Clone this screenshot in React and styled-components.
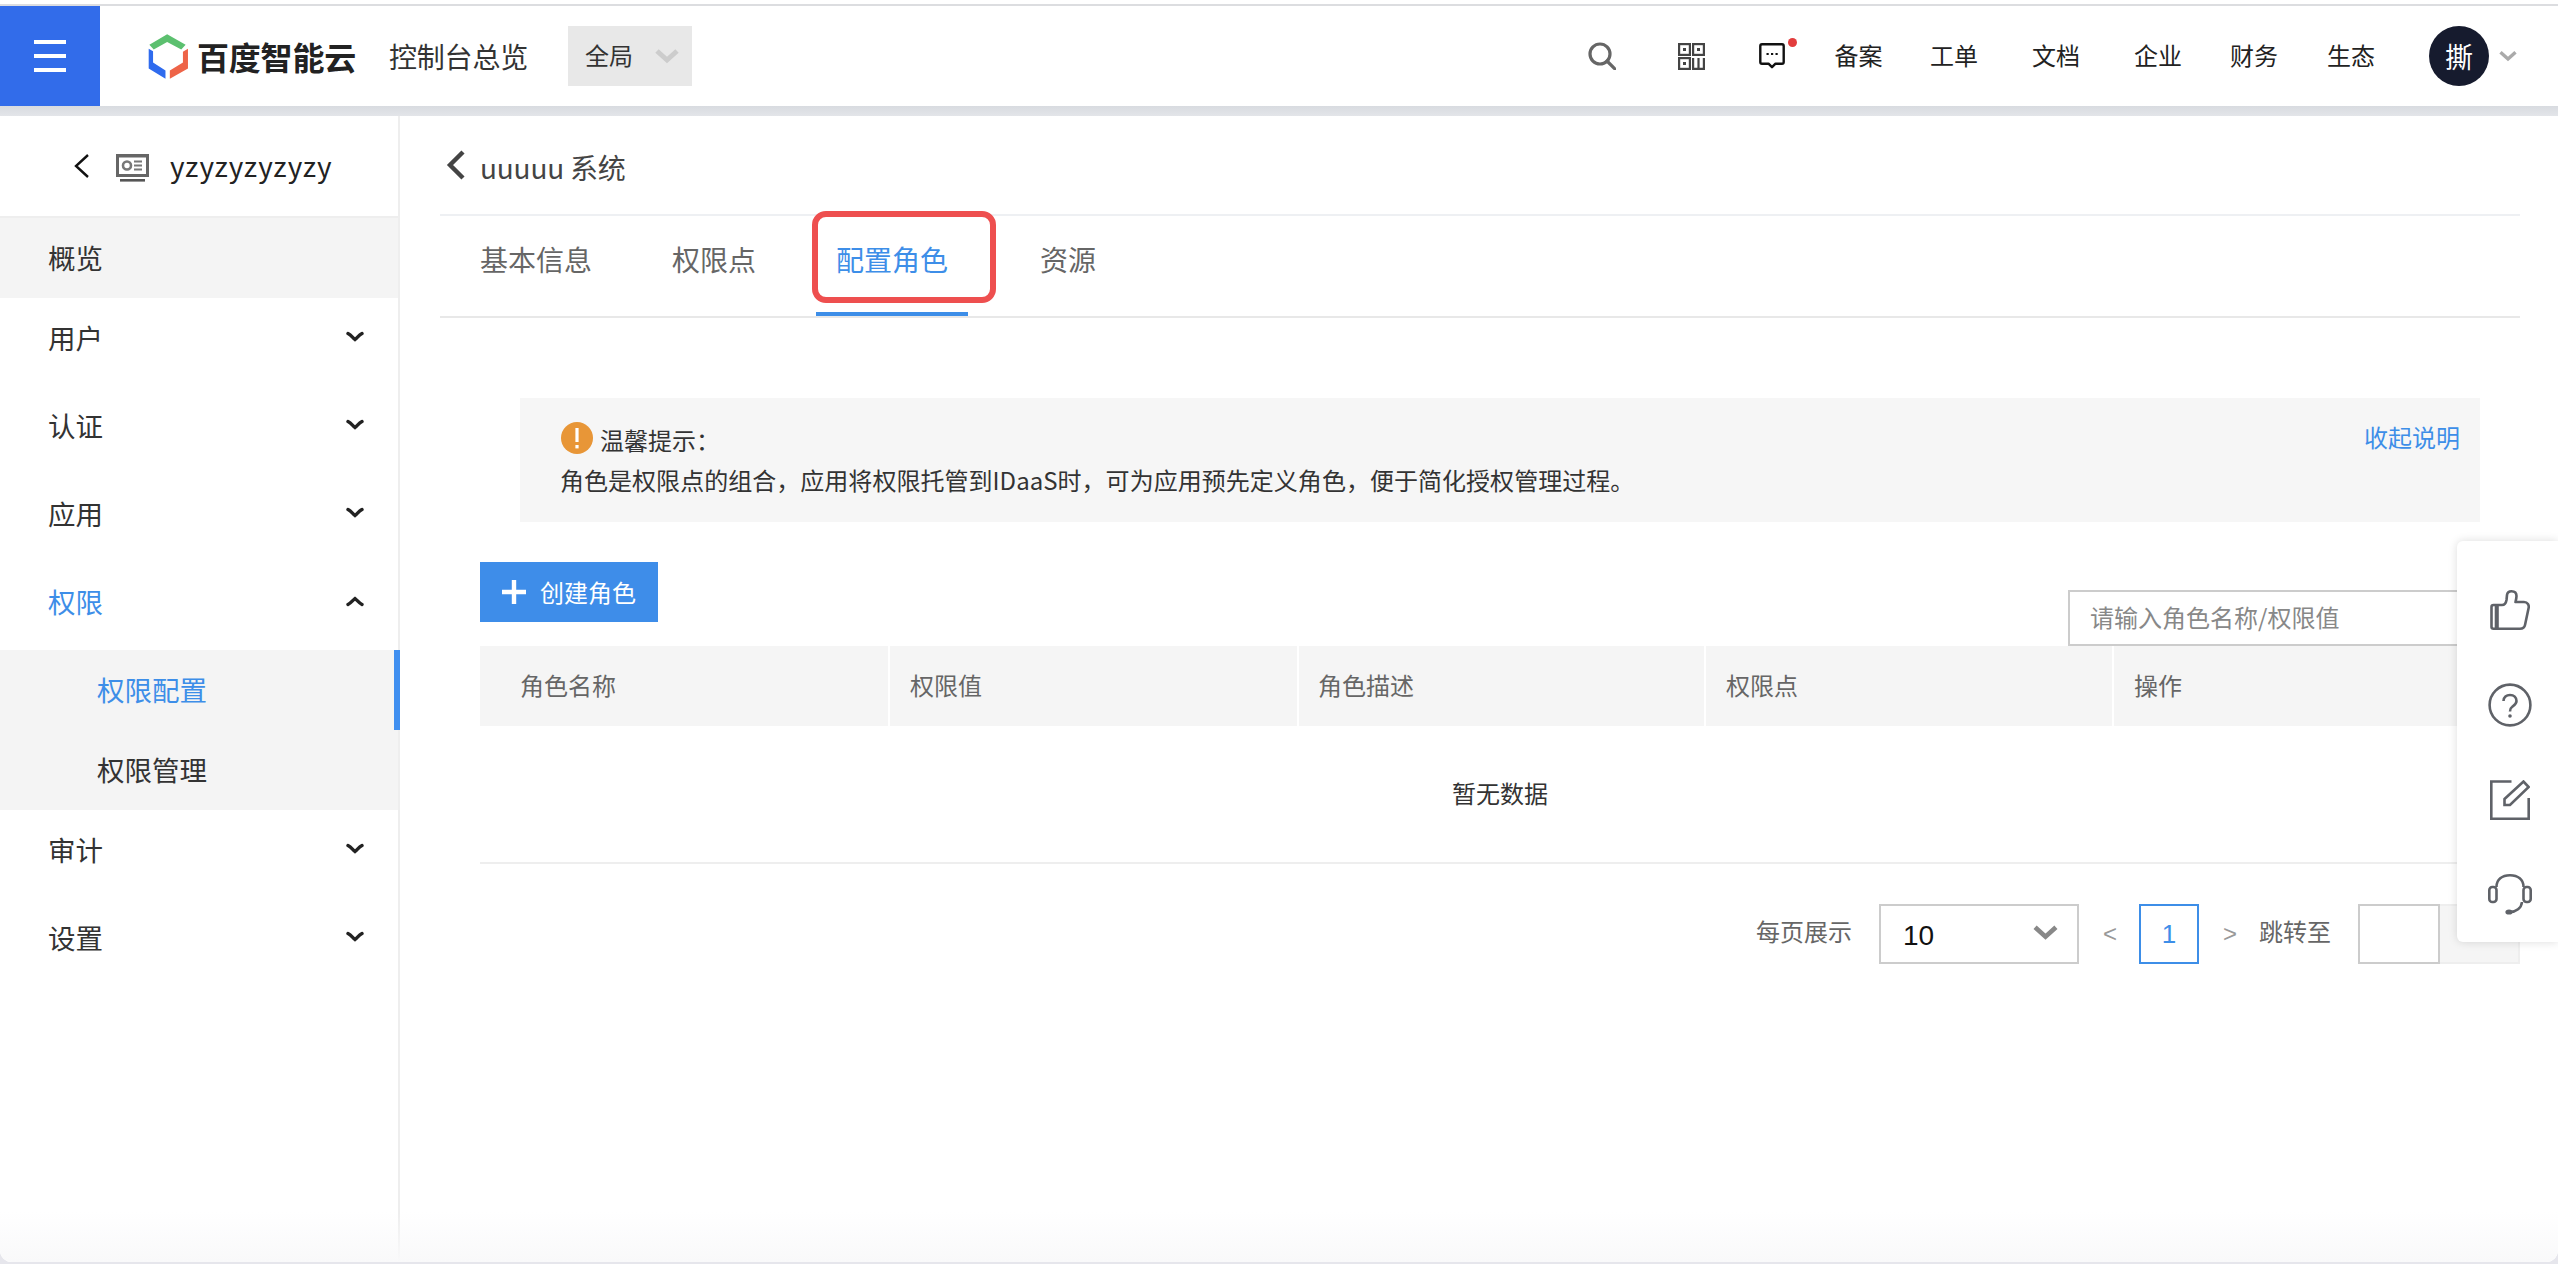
import React from "react";
import styled, { createGlobalStyle } from "styled-components";

const Global = createGlobalStyle`
  html, body { margin: 0; padding: 0; background: #e6e6ec; }
  body { font-family: "Noto Sans CJK SC", "Noto Sans", sans-serif; color: #333; overflow: hidden; }
  * { box-sizing: border-box; }
`;

const Page = styled.div`
  position: relative;
  width: 2558px;
  height: 1262px;
  background: #fff;
  border-radius: 0 0 12px 12px;
  overflow: hidden;
  display: flex;
  flex-direction: column;
`;
const TopEdge = styled.div`
  height: 6px;
  flex: none;
  background: #fff;
  border-bottom: 2px solid #dcdde0;
`;
const Header = styled.header`
  height: 100px;
  flex: none;
  display: flex;
  align-items: center;
  background: #fff;
`;
const HeaderShade = styled.div`
  height: 10px;
  flex: none;
  background: linear-gradient(#d8dbe0, #e3e5e9);
`;
const Burger = styled.div`
  width: 100px;
  height: 100px;
  background: #326cea;
  display: flex;
  flex-direction: column;
  align-items: center;
  justify-content: center;
  gap: 10px;
`;
const BurgerBar = styled.span`
  width: 32px;
  height: 4px;
  background: #fff;
`;
const Brand = styled.div`
  display: flex;
  align-items: center;
  margin-left: 47px;
  gap: 7px;
`;
const BrandName = styled.span`
  font-size: 32px;
  font-weight: 700;
  color: #222;
  letter-spacing: -0.2px;
  white-space: nowrap;
`;
const ConsoleTitle = styled.span`
  margin-left: 33px;
  font-size: 28px;
  letter-spacing: -0.2px;
  color: #333;
`;
const ScopeSelect = styled.div`
  margin-left: 40px;
  width: 124px;
  height: 60px;
  background: #e8e8e8;
  display: flex;
  align-items: center;
  padding: 0 0 0 17px;
  gap: 22px;
  font-size: 24px;
  color: #333;
`;
const ScopeText = styled.span`
  margin-bottom: 3px;
`;
const HeaderRight = styled.div`
  margin-left: auto;
  display: flex;
  align-items: center;
  padding-right: 41px;
`;
const IconSlot = styled.span`
  display: flex;
  position: relative;
  margin-left: ${(p) => p.$ml || 0}px;
`;
const RedDot = styled.i`
  position: absolute;
  top: -5px;
  right: -12px;
  width: 9px;
  height: 9px;
  border-radius: 50%;
  background: #e23d3d;
`;
const NavLink = styled.span`
  font-size: 24px;
  color: #222;
  margin-left: ${(p) => p.$ml}px;
  margin-bottom: 3px;
`;
const Avatar = styled.span`
  width: 60px;
  height: 60px;
  margin-left: 54px;
  border-radius: 50%;
  background: #161b2e;
  color: #fff;
  font-size: 28px;
  display: flex;
  align-items: center;
  justify-content: center;
`;
const AvatarCaret = styled.span`
  display: flex;
  margin-left: 10px;
`;

const Body = styled.div`
  flex: 1;
  display: flex;
  min-height: 0;
  background: #fff;
`;
const Sidebar = styled.aside`
  width: 400px;
  flex: none;
  border-right: 2px solid #eeeeee;
`;
const SideHead = styled.div`
  height: 102px;
  border-bottom: 2px solid #eeeeee;
  display: flex;
  align-items: center;
  padding-left: 74px;
  font-size: 28px;
  color: #222;
`;
const SideIcon = styled.span`
  display: flex;
  margin: 3px 21px 0 27px;
`;
const SideName = styled.span`
  margin-bottom: 3px;
  letter-spacing: 1.2px;
`;
const MenuRow = styled.div`
  height: 80px;
  margin-bottom: ${(p) => p.$mb ?? 8}px;
  padding: 0 34px 3px 48px;
  display: flex;
  align-items: center;
  justify-content: space-between;
  font-size: 27.5px;
  color: ${(p) => (p.$active ? "#3d8ee8" : "#333")};
  background: ${(p) => (p.$shaded ? "#f4f4f4" : "transparent")};
`;
const SubGroup = styled.div`
  background: #f4f4f4;
`;
const SubRow = styled.div`
  position: relative;
  height: 80px;
  padding: 0 0 3px 97px;
  display: flex;
  align-items: center;
  font-size: 27.5px;
  color: ${(p) => (p.$active ? "#3d8ee8" : "#333")};
  &::after {
    content: "";
    display: ${(p) => (p.$active ? "block" : "none")};
    position: absolute;
    top: 0;
    bottom: 0;
    right: -2px;
    width: 6px;
    background: #3f8ff0;
  }
`;

const Main = styled.main`
  flex: 1;
  min-width: 0;
  padding: 0 38px 0 40px;
`;
const BackRow = styled.div`
  height: 100px;
  border-bottom: 2px solid #eef0f3;
  display: flex;
  align-items: center;
  padding-left: 6px;
  gap: 15px;
  font-size: 28px;
  color: #444;
`;
const BackTitle = styled.span`
  margin-top: 3px;
  letter-spacing: -0.2px;
`;
const Tabs = styled.nav`
  height: 102px;
  border-bottom: 2px solid #e8e8e8;
  display: flex;
  padding-left: 20px;
`;
const Tab = styled.div`
  position: relative;
  height: 100px;
  padding: 0 20px 11px;
  margin-left: ${(p) => p.$ml || 0}px;
  border-bottom: 4px solid ${(p) => (p.$active ? "#3d8ee8" : "transparent")};
  display: flex;
  align-items: center;
  font-size: 28px;
  color: ${(p) => (p.$active ? "#3d8ee8" : "#666")};
`;
const Annotation = styled.span`
  position: absolute;
  top: -5px;
  left: -4px;
  width: 184px;
  height: 92px;
  border: 6px solid #ee4f4f;
  border-radius: 14px;
`;
const Section = styled.section`
  padding-left: 40px;
`;
const Notice = styled.div`
  margin: 80px 40px 40px 40px;
  height: 124px;
  background: #f6f6f6;
  padding: 22px 20px 20px 40px;
  display: flex;
  justify-content: space-between;
  font-size: 24px;
  line-height: 40px;
  color: #333;
`;
const NoticeTitle = styled.div`
  display: flex;
  align-items: center;
  gap: 7px;
`;
const NoticeIcon = styled.span`
  width: 32px;
  height: 32px;
  margin-top: -5px;
  margin-left: 1px;
  display: flex;
`;
const NoticeBody = styled.div`
  letter-spacing: 0.03px;
`;
const Collapse = styled.a`
  color: #3d8ee8;
  line-height: 34px;
`;
const Toolbar = styled.div`
  height: 84px;
  display: flex;
  justify-content: space-between;
  align-items: flex-start;
`;
const PrimaryButton = styled.button`
  width: 178px;
  height: 60px;
  border: 0;
  padding: 0 0 0 22px;
  background: #3e8de9;
  color: #fff;
  font: inherit;
  font-size: 24px;
  display: flex;
  align-items: center;
  gap: 14px;
`;
const ButtonLabel = styled.span`
  margin-bottom: 2px;
`;
const SearchInput = styled.input`
  width: 452px;
  height: 56px;
  margin-top: 28px;
  border: 2px solid #cccccc;
  padding: 0 20px 3px;
  font: inherit;
  font-size: 24px;
  outline: none;
  &::placeholder { color: #888; opacity: 1; }
`;
const HeadRow = styled.div`
  display: grid;
  grid-template-columns: 408px 407px 405px 406px 1fr;
  gap: 2px;
`;
const HeadCell = styled.div`
  height: 80px;
  background: #f5f5f5;
  padding: 0 0 3px ${(p) => p.$pl}px;
  display: flex;
  align-items: center;
  font-size: 24px;
  color: #666;
`;
const EmptyRow = styled.div`
  height: 138px;
  padding-bottom: 3px;
  border-bottom: 2px solid #eeeeee;
  display: flex;
  align-items: center;
  justify-content: center;
  font-size: 24px;
  color: #333;
`;
const Pager = styled.div`
  margin-top: 40px;
  display: flex;
  justify-content: flex-end;
  align-items: center;
  gap: 24px;
  font-size: 24px;
  color: #666;
`;
const PagerLabel = styled.span`
  margin-bottom: 7px;
  margin-right: 3px;
`;
const SizeSelect = styled.div`
  width: 200px;
  height: 60px;
  border: 2px solid #cccccc;
  padding: 4px 19px 0 22px;
  display: flex;
  align-items: center;
  justify-content: space-between;
  font-family: "Liberation Sans", sans-serif;
  font-size: 28px;
  color: #111;
`;
const SizeCaret = styled.span`
  display: flex;
  margin-bottom: 8px;
`;
const PageArrow = styled.span`
  width: 12px;
  font-family: "Liberation Sans", sans-serif;
  font-size: 24px;
  color: #999;
`;
const PageNumber = styled.span`
  width: 60px;
  height: 60px;
  border: 2px solid #3d8ee8;
  color: #3d8ee8;
  font-family: "Liberation Sans", sans-serif;
  font-size: 26px;
  display: flex;
  align-items: center;
  justify-content: center;
`;
const GotoGroup = styled.div`
  display: flex;
`;
const GotoInput = styled.div`
  width: 82px;
  height: 60px;
  border: 2px solid #cccccc;
`;
const GotoButton = styled.div`
  width: 80px;
  height: 60px;
  border: 2px solid #eeeeee;
  border-left: 0;
  background: #f5f5f5;
`;
const FloatPanel = styled.div`
  position: absolute;
  top: 541px;
  right: 0;
  width: 101px;
  height: 401px;
  padding: 22px 0 0 5px;
  background: #fff;
  border-radius: 6px 0 0 6px;
  box-shadow: 0 0 10px rgba(0, 0, 0, 0.14);
  display: flex;
  flex-direction: column;
  align-items: center;
`;
const FloatButton = styled.div`
  height: 96px;
  display: flex;
  align-items: center;
  justify-content: center;
`;
const BottomFade = styled.div`
  position: absolute;
  left: 0;
  right: 0;
  bottom: 0;
  height: 50px;
  background: linear-gradient(rgba(249, 249, 250, 0), #f9f9fa);
  pointer-events: none;
`;

const Logo = () => (
  <svg width="43" height="47" viewBox="50 38 128 140">
    <path d="M110 42 L165 73 L152 87 L110 65 L70 87 L57 73 Z" fill="#5cc06f" />
    <path d="M55 85 L68 92 L68 126 L105 150 L105 174 L55 144 Z" fill="#2f6bee" />
    <path d="M172 85 L172 144 L118 174 L118 150 L157 126 L157 94 Z" fill="#ee6448" />
  </svg>
);
const Chevron = ({ w, h, color, sw }) => (
  <svg width={w} height={h} viewBox="0 0 24 16">
    <path d="M2 3 L12 12 L22 3" fill="none" stroke={color} strokeWidth={sw} />
  </svg>
);
const MenuCaret = ({ up }) => (
  <svg width="18" height="12" viewBox="0 0 18 12">
    <path
      d={up ? "M2 9.5 C5 8 7 5 9 3.5 C11 5 13 8 16 9.5" : "M2 2.5 C5 4 7 7 9 8.5 C11 7 13 4 16 2.5"}
      fill="none"
      stroke="#222"
      strokeWidth="3.4"
      strokeLinecap="round"
    />
  </svg>
);
const SearchGlyph = () => (
  <svg width="28" height="28" viewBox="0 0 28 28" fill="none" stroke="#666" strokeWidth="3.2">
    <circle cx="12" cy="12" r="10" />
    <path d="M19 19 L27 27" strokeLinecap="round" />
  </svg>
);
const QrGlyph = () => (
  <svg width="27" height="27" viewBox="0 0 27 27" fill="none" stroke="#444" strokeWidth="2.2">
    <rect x="1.1" y="1.1" width="10.8" height="10.8" />
    <rect x="15.1" y="1.1" width="10.8" height="10.8" />
    <rect x="1.1" y="15.1" width="10.8" height="10.8" />
    <path d="M15.1 15 V25.9 H25.9 V15 M20.5 15 V25.9" />
    <rect x="5" y="5" width="3" height="3" fill="#444" stroke="none" />
    <rect x="19" y="5" width="3" height="3" fill="#444" stroke="none" />
    <rect x="5" y="19" width="3" height="3" fill="#444" stroke="none" />
  </svg>
);
const ChatGlyph = () => (
  <svg width="26" height="26" viewBox="0 0 26 26" fill="none">
    <path
      d="M3 1.3 H23 C24 1.3 24.7 2 24.7 3 V19 C24.7 20 24 20.7 23 20.7 H16.5 L13 24.2 L9.5 20.7 H3 C2 20.7 1.3 20 1.3 19 V3 C1.3 2 2 1.3 3 1.3 Z"
      stroke="#111"
      strokeWidth="2.4"
      strokeLinejoin="round"
    />
    <path d="M7.5 11 H9.7 M12 11 H14.2 M16.5 11 H18.7" stroke="#111" strokeWidth="2.2" />
  </svg>
);
const AppGlyph = () => (
  <svg width="33" height="28" viewBox="0 0 33 28" fill="none">
    <rect x="1.5" y="1.5" width="30" height="20" stroke="#666" strokeWidth="3" />
    <rect x="0.5" y="0.5" width="32" height="3" fill="#666" />
    <circle cx="11" cy="11.5" r="4" stroke="#777" strokeWidth="2.6" />
    <path d="M18 7.5 H26 M18 11.5 H26 M18 15.5 H26" stroke="#777" strokeWidth="2" />
    <rect x="4" y="25" width="25" height="2.6" fill="#555" />
  </svg>
);
const BackGlyph = ({ width, height, color, sw, d }) => (
  <svg width={width} height={height} viewBox={`0 0 ${width} ${height}`}>
    <path d={d} fill="none" stroke={color} strokeWidth={sw} />
  </svg>
);
const WarnGlyph = () => (
  <svg width="32" height="32" viewBox="0 0 32 32">
    <circle cx="16" cy="16" r="16" fill="#e89637" />
    <rect x="14.4" y="6" width="3.2" height="14" fill="#fff" />
    <rect x="14.4" y="23" width="3.2" height="3.4" fill="#fff" />
  </svg>
);
const PlusGlyph = () => (
  <svg width="24" height="24" viewBox="0 0 24 24">
    <path d="M12 0 V24 M0 12 H24" stroke="#fff" strokeWidth="4.4" />
  </svg>
);
const floatStroke = { fill: "none", stroke: "#5f6268", strokeWidth: 2.6 };
const ThumbGlyph = () => (
  <svg width="40" height="40" viewBox="0 0 40 40" {...floatStroke} strokeLinejoin="round">
    <path d="M7.5 15 H12 C15 15 16 13 16.5 10 L17 5 C17.3 2.5 19.3 1.3 21.5 1.3 C24.5 1.3 26.5 3 26.5 6 C26.5 8 26 10 25.5 12 H34 C37.5 12 39.5 15 38.5 18.5 L35 35 C34.5 37.5 33 38.7 30 38.7 H3.5 C2 38.7 1.5 38 1.5 37 V17 C1.5 15.7 2 15 3.5 15 H7.5 V38.7" />
    <path d="M6 15 V38.7" />
  </svg>
);
const HelpGlyph = () => (
  <svg width="44" height="44" viewBox="0 0 44 44" {...floatStroke}>
    <circle cx="22" cy="22" r="20.4" />
    <path d="M15.5 18 C15.5 14 18.5 12 22 12 C26 12 28.5 14.5 28.5 18 C28.5 21 26 22.5 24 24 C22.5 25 22 26 22 28.5" />
    <circle cx="22" cy="33" r="1.8" fill="#5f6268" stroke="none" />
  </svg>
);
const EditGlyph = () => (
  <svg width="40" height="40" viewBox="0 0 40 40" {...floatStroke}>
    <path d="M21.5 1.5 H1.3 V38.7 H38.7 V18" />
    <path d="M14.5 19 L33.5 1.5 L38.7 7 L20 25 H14.5 Z" />
  </svg>
);
const HeadsetGlyph = () => (
  <svg width="44" height="41" viewBox="0 0 44 41" {...floatStroke}>
    <path d="M8.5 13 C8.5 5.5 14 1.3 22 1.3 C30 1.3 35.5 5.5 35.5 13" />
    <rect x="1.3" y="13" width="7.2" height="15" rx="3" />
    <rect x="35.5" y="13" width="7.2" height="15" rx="3" />
    <path d="M34 28 C33.5 34 28 38 22 38" />
    <ellipse cx="21" cy="38" rx="3.6" ry="2.6" fill="#5f6268" stroke="none" />
  </svg>
);

const menu = ["用户", "认证", "应用"];
const columns = [
  { label: "角色名称", pad: 40 },
  { label: "权限值", pad: 20 },
  { label: "角色描述", pad: 19 },
  { label: "权限点", pad: 20 },
  { label: "操作", pad: 20 },
];

export default function App() {
  return (
    <>
      <Global />
      <Page>
        <TopEdge />
        <Header>
          <Burger>
            <BurgerBar />
            <BurgerBar />
            <BurgerBar />
          </Burger>
          <Brand>
            <Logo />
            <BrandName>百度智能云</BrandName>
          </Brand>
          <ConsoleTitle>控制台总览</ConsoleTitle>
          <ScopeSelect>
            <ScopeText>全局</ScopeText>
            <Chevron w={24} h={16} color="#cccccc" sw={5} />
          </ScopeSelect>
          <HeaderRight>
            <IconSlot><SearchGlyph /></IconSlot>
            <IconSlot $ml={62}><QrGlyph /></IconSlot>
            <IconSlot $ml={54}>
              <ChatGlyph />
              <RedDot />
            </IconSlot>
            <NavLink $ml={50}>备案</NavLink>
            <NavLink $ml={47.5}>工单</NavLink>
            <NavLink $ml={54}>文档</NavLink>
            <NavLink $ml={54}>企业</NavLink>
            <NavLink $ml={48}>财务</NavLink>
            <NavLink $ml={49}>生态</NavLink>
            <Avatar>撕</Avatar>
            <AvatarCaret>
              <Chevron w={18} h={12} color="#aaaaaa" sw={4.6} />
            </AvatarCaret>
          </HeaderRight>
        </Header>
        <HeaderShade />
        <Body>
          <Sidebar>
            <SideHead>
              <BackGlyph width={15} height={24} color="#111" sw={2.4} d="M14 1 L2 12 L14 23" />
              <SideIcon><AppGlyph /></SideIcon>
              <SideName>yzyzyzyzyzy</SideName>
            </SideHead>
            <MenuRow $shaded $mb={0}>概览</MenuRow>
            {menu.map((label) => (
              <MenuRow key={label}>
                {label}
                <MenuCaret />
              </MenuRow>
            ))}
            <MenuRow $active>
              权限
              <MenuCaret up />
            </MenuRow>
            <SubGroup>
              <SubRow $active>权限配置</SubRow>
              <SubRow>权限管理</SubRow>
            </SubGroup>
            <MenuRow>
              审计
              <MenuCaret />
            </MenuRow>
            <MenuRow>
              设置
              <MenuCaret />
            </MenuRow>
          </Sidebar>
          <Main>
            <BackRow>
              <BackGlyph width={19} height={30} color="#444" sw={4.4} d="M17 2 L4 15 L17 28" />
              <BackTitle>uuuuu 系统</BackTitle>
            </BackRow>
            <Tabs>
              <Tab>基本信息</Tab>
              <Tab $ml={40}>权限点</Tab>
              <Tab $ml={40} $active>
                配置角色
                <Annotation />
              </Tab>
              <Tab $ml={52}>资源</Tab>
            </Tabs>
            <Section>
              <Notice>
                <div>
                  <NoticeTitle>
                    <NoticeIcon><WarnGlyph /></NoticeIcon>
                    温馨提示：
                  </NoticeTitle>
                  <NoticeBody>角色是权限点的组合，应用将权限托管到IDaaS时，可为应用预先定义角色，便于简化授权管理过程。</NoticeBody>
                </div>
                <Collapse>收起说明</Collapse>
              </Notice>
              <Toolbar>
                <PrimaryButton>
                  <PlusGlyph />
                  <ButtonLabel>创建角色</ButtonLabel>
                </PrimaryButton>
                <SearchInput placeholder="请输入角色名称/权限值" />
              </Toolbar>
              <HeadRow>
                {columns.map((c) => (
                  <HeadCell key={c.label} $pl={c.pad}>{c.label}</HeadCell>
                ))}
              </HeadRow>
              <EmptyRow>暂无数据</EmptyRow>
              <Pager>
                <PagerLabel>每页展示</PagerLabel>
                <SizeSelect>
                  10
                  <SizeCaret><Chevron w={25} h={17} color="#888888" sw={4.5} /></SizeCaret>
                </SizeSelect>
                <PageArrow>&lt;</PageArrow>
                <PageNumber>1</PageNumber>
                <PageArrow>&gt;</PageArrow>
                <PagerLabel>跳转至</PagerLabel>
                <GotoGroup>
                  <GotoInput />
                  <GotoButton />
                </GotoGroup>
              </Pager>
            </Section>
          </Main>
        </Body>
        <FloatPanel>
          <FloatButton><ThumbGlyph /></FloatButton>
          <FloatButton><HelpGlyph /></FloatButton>
          <FloatButton><EditGlyph /></FloatButton>
          <FloatButton><HeadsetGlyph /></FloatButton>
        </FloatPanel>
        <BottomFade />
      </Page>
    </>
  );
}
